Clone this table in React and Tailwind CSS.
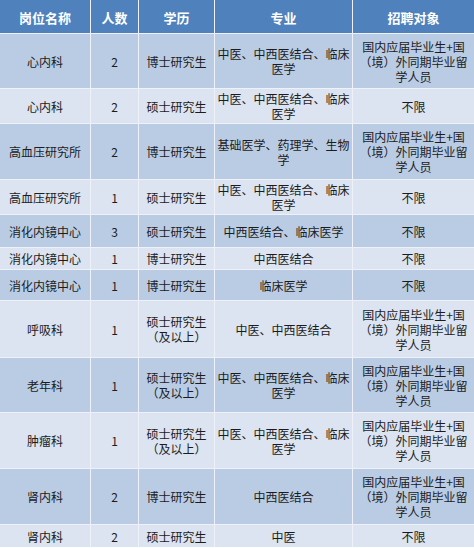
import React from "react";

const ABROAD = "国内应届毕业生+国（境）外同期毕业留学人员";

const rows = [
  ["心内科", "2", "博士研究生", "中医、中西医结合、临床医学", ABROAD, "h-[54px]"],
  ["心内科", "2", "硕士研究生", "中医、中西医结合、临床医学", "不限", "h-[34px]"],
  ["高血压研究所", "2", "博士研究生", "基础医学、药理学、生物学", ABROAD, "h-[55px]"],
  ["高血压研究所", "1", "硕士研究生", "中医、中西医结合、临床医学", "不限", "h-[34px]"],
  ["消化内镜中心", "3", "硕士研究生", "中西医结合、临床医学", "不限", "h-[32px]"],
  ["消化内镜中心", "1", "博士研究生", "中西医结合", "不限", "h-[21px]"],
  ["消化内镜中心", "1", "博士研究生", "临床医学", "不限", "h-[30px]"],
  ["呼吸科", "1", "硕士研究生（及以上）", "中医、中西医结合", ABROAD, "h-[56px]"],
  ["老年科", "1", "硕士研究生（及以上）", "中医、中西医结合、临床医学", ABROAD, "h-[54px]"],
  ["肿瘤科", "1", "硕士研究生（及以上）", "中医、中西医结合、临床医学", ABROAD, "h-[55px]"],
  ["肾内科", "2", "博士研究生", "中西医结合", ABROAD, "h-[55px]"],
  ["肾内科", "2", "硕士研究生", "中医", "不限", "h-[22px]"],
];

const headers = ["岗位名称", "人数", "学历", "专业", "招聘对象"];

export default function App() {
  return (
    <div
      className="w-[474px] h-[548px] overflow-hidden bg-white"
      style={{ fontFamily: '"Noto Sans CJK SC", "Liberation Sans", sans-serif' }}
    >
      <div className="grid grid-cols-[90px_47px_75px_137px_121px] gap-px bg-[#eef2f8]">
        {headers.map((h) => (
          <div
            key={h}
            className="h-[33px] bg-[#4f81bd] text-white font-bold text-[13px] flex items-center justify-center pt-[2px]"
          >
            {h}
          </div>
        ))}
        {rows.map((r, i) => {
          const bg = i % 2 === 0 ? "bg-[#b9cce4]" : "bg-[#dbe4f0]";
          return r.slice(0, 5).map((cell, j) => (
            <div
              key={i + "-" + j}
              className={`${r[5]} ${bg} flex items-center justify-center text-center text-[12px] leading-[15px] text-[#1c1c1c] px-[2px]`}
            >
              {cell}
            </div>
          ));
        })}
      </div>
    </div>
  );
}
